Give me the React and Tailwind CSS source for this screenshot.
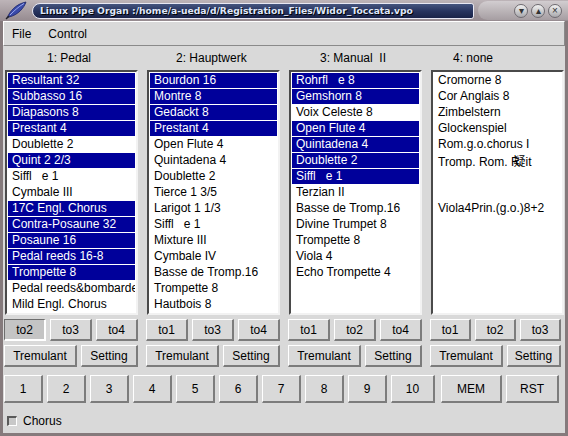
const SP = '\u00a0\u00a0\u00a0'

const columns = [
  {
    title: '1: Pedal',
    titlePad: 'pl-[42px]',
    items: [
      ['Resultant 32', 1],
      ['Subbasso 16', 1],
      ['Diapasons 8', 1],
      ['Prestant 4', 1],
      ['Doublette 2', 0],
      ['Quint 2 2/3', 1],
      ['Siffl' + SP + 'e 1', 0],
      ['Cymbale III', 0],
      ['17C Engl. Chorus', 1],
      ['Contra-Posaune 32', 1],
      ['Posaune 16', 1],
      ['Pedal reeds 16-8', 1],
      ['Trompette 8', 1],
      ['Pedal reeds&bombarde', 0],
      ['Mild Engl. Chorus', 0],
    ],
    couplers: ['to2', 'to3', 'to4'],
    pressed: 'to2',
  },
  {
    title: '2: Hauptwerk',
    titlePad: 'pl-[29px]',
    items: [
      ['Bourdon 16', 1],
      ['Montre 8', 1],
      ['Gedackt 8', 1],
      ['Prestant 4', 1],
      ['Open Flute 4', 0],
      ['Quintadena 4', 0],
      ['Doublette 2', 0],
      ['Tierce 1 3/5', 0],
      ['Larigot 1 1/3', 0],
      ['Siffl' + SP + 'e 1', 0],
      ['Mixture III', 0],
      ['Cymbale IV', 0],
      ['Basse de Tromp.16', 0],
      ['Trompette 8', 0],
      ['Hautbois 8', 0],
    ],
    couplers: ['to1', 'to3', 'to4'],
  },
  {
    title: '3: Manual  II',
    titlePad: 'pl-[31px]',
    items: [
      ['Rohrfl' + SP + 'e 8', 1],
      ['Gemshorn 8', 1],
      ['Voix Celeste 8', 0],
      ['Open Flute 4', 1],
      ['Quintadena 4', 1],
      ['Doublette 2', 1],
      ['Siffl' + SP + 'e 1', 1],
      ['Terzian II', 0],
      ['Basse de Tromp.16', 0],
      ['Divine Trumpet 8', 0],
      ['Trompette 8', 0],
      ['Viola 4', 0],
      ['Echo Trompette 4', 0],
    ],
    couplers: ['to1', 'to2', 'to4'],
  },
  {
    title: '4: none',
    titlePad: 'pl-[22px]',
    items: [
      ['Cromorne 8', 0],
      ['Cor Anglais 8', 0],
      ['Zimbelstern', 0],
      ['Glockenspiel', 0],
      ['Rom.g.o.chorus I', 0],
      ['RECIT', 0],
      ['', 0],
      ['', 0],
      ['Viola4Prin.(g.o.)8+2', 0],
    ],
    couplers: ['to1', 'to2', 'to3'],
    last: true,
  },
]

function Btn({ children, className = '', pressed = false }) {
  return (
    <div
      className={`flex items-center justify-center border-t border-l border-b-2 border-r-2 ${
        pressed
          ? 'bg-[#c4c4c4] border-t-[#6e6e6e] border-l-[#6e6e6e] border-b-white border-r-white'
          : 'bg-[#d9d9d9] border-t-white border-l-white border-b-[#7c7c7c] border-r-[#7c7c7c]'
      } ${className}`}
    >
      {children}
    </div>
  )
}

function Row({ text, sel }) {
  return (
    <div
      className={`h-[16px] border-b border-white pl-[4px] leading-[15px] whitespace-nowrap overflow-hidden ${
        sel ? 'bg-[#00009a] text-white' : 'text-black'
      }`}
    >
      {text === 'RECIT' ? (
        <>
          Tromp. Rom. R
          <span className="inline-block ml-[-6px] font-['Noto_Sans_CJK_JP',sans-serif] text-[12px]">疑</span>
          it
        </>
      ) : (
        text || '\u00a0'
      )}
    </div>
  )
}

export default function App() {
  return (
    <div className="w-[568px] h-[436px] overflow-hidden bg-[#d9d9d9] font-['Liberation_Sans',Arial,sans-serif] text-[12px] text-black flex flex-col">
      {/* title bar */}
      <div className="h-[21px] flex items-center bg-gradient-to-b from-[#bdb4b8] to-[#968b90]">
        <div className="w-[32px] h-[21px] flex items-center justify-center">
          <svg width="24" height="19" viewBox="0 0 24 19">
            <path d="M3 17 C6 10 12 3 22 1 C20 7 14 14 5 16 Z" fill="#3949a8" stroke="#1c2468" strokeWidth="0.8" />
            <path d="M6 14 C10 10 14 6 20 2.5" stroke="#9aa8ee" strokeWidth="1" fill="none" />
            <path d="M2 18 L5 15" stroke="#222" strokeWidth="1.2" />
          </svg>
        </div>
        <div className="w-[442px] h-[16px] flex items-center pl-[7px] rounded-l-[9px] rounded-r-[3px] border border-[#e8e8f4] bg-gradient-to-b from-[#46557f] via-[#28345f] to-[#1a2348]">
          <span className="font-['DejaVu_Sans',sans-serif] font-bold text-[9.2px] leading-none text-[#dfe6f8] [text-shadow:1px_1px_0_#000] whitespace-nowrap">
            Linux Pipe Organ :/home/a-ueda/d/Registration_Files/Widor_Toccata.vpo
          </span>
        </div>
        <div className="flex-1 h-[19px] ml-[4px] flex items-center justify-end gap-[3px] pr-[6px] rounded-l-[10px] bg-gradient-to-b from-[#d2cdd0] to-[#a69ea2]">
          {['▾', '▴', '×'].map((g) => (
            <div
              key={g}
              className="w-[14px] h-[14px] rounded-full border border-[#6e6a70] bg-gradient-to-b from-[#f2f2f2] to-[#a9a9ad] flex items-center justify-center text-[10px] leading-none text-[#333]"
            >
              {g}
            </div>
          ))}
        </div>
      </div>

      {/* window body */}
      <div className="flex-1 flex flex-col border-x-[3px] border-b-[3px] border-[#857a7c]">
        {/* menu */}
        <div className="h-[25px] flex items-center gap-[17px] pl-[8px] border-t border-l border-white border-b border-r border-b-[#8a8a8a] border-r-[#8a8a8a]">
          <span>File</span>
          <span>Control</span>
        </div>

        {/* headers + lists + couplers */}
        <div className="grid grid-cols-[133px_133px_133px_133px] gap-x-[9px] pl-[2px] pt-[5px]">
          {columns.map((c) => (
            <div key={c.title} className="flex flex-col">
              <div className={`h-[19px] leading-[14px] whitespace-pre ${c.titlePad}`}>{c.title}</div>
              <div className="h-[245px] bg-white border-2 border-t-[#4a4a4a] border-l-[#4a4a4a] border-b-[#f2f2f2] border-r-[#f2f2f2] p-px overflow-hidden">
                {c.items.map(([t, s], i) => (
                  <Row key={i} text={t} sel={s} />
                ))}
              </div>
              <div className={`flex gap-[4px] mt-[4px] ml-[-1px] ${c.last ? 'mr-[3px]' : ''}`}>
                {c.couplers.map((b) => (
                  <Btn key={b} pressed={c.pressed === b} className="flex-1 h-[22px]">
                    {b}
                  </Btn>
                ))}
              </div>
              <div className={`flex gap-[4px] mt-[4px] ml-[-1px] ${c.last ? 'mr-[3px]' : ''}`}>
                <Btn className="w-[73px] h-[22px]">Tremulant</Btn>
                <Btn className="flex-1 h-[22px]">Setting</Btn>
              </div>
            </div>
          ))}
        </div>

        {/* combination buttons */}
        <div className="flex gap-[4px] pl-[1px] mt-[8px]">
          {['1', '2', '3', '4', '5', '6', '7', '8', '9'].map((n) => (
            <Btn key={n} className="w-[39px] h-[28px]">
              {n}
            </Btn>
          ))}
          <Btn className="w-[44px] h-[28px]">10</Btn>
          <Btn className="w-[61px] h-[28px] ml-[2px]">MEM</Btn>
          <Btn className="w-[53px] h-[28px]">RST</Btn>
        </div>

        {/* chorus */}
        <div className="flex items-center gap-[6px] pl-[4px] mt-[9px]">
          <div className="w-[10px] h-[10px] border-t-2 border-l-2 border-t-[#5a5a5a] border-l-[#5a5a5a] border-b border-r border-b-white border-r-white bg-[#c8c8c8]" />
          <span>Chorus</span>
        </div>
      </div>
    </div>
  )
}
